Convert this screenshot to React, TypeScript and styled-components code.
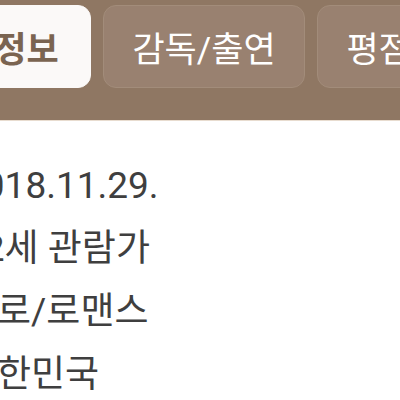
import styled, { createGlobalStyle } from "styled-components";

const GlobalStyle = createGlobalStyle`
  html, body {
    margin: 0;
    padding: 0;
    background: #ffffff;
    overflow: hidden;
  }
  body {
    font-family: Roboto, "Noto Sans CJK KR", sans-serif;
  }
`;

const Page = styled.div`
  width: 400px;
  height: 400px;
  overflow: hidden;
  background: #ffffff;
`;

const TabBar = styled.div`
  height: 121px;
  box-sizing: border-box;
  padding: 5px 0 0;
  background: #8f7763;
  border-bottom: 1px solid #e8dccf;
  display: flex;
  align-items: flex-start;
  gap: 12px;
  margin-left: -111px;
`;

const Tab = styled.div<{ $active?: boolean }>`
  flex: none;
  width: 202px;
  height: 83px;
  box-sizing: border-box;
  border-radius: 13px;
  display: flex;
  align-items: center;
  justify-content: center;
  font-size: 35px;
  white-space: nowrap;
  font-weight: ${(p) => (p.$active ? 700 : 400)};
  color: ${(p) => (p.$active ? "#7a6451" : "#ffffff")};
  background: ${(p) => (p.$active ? "#fbf9f8" : "#998170")};
  border: 1px solid ${(p) => (p.$active ? "#fbf9f8" : "#a28c7a")};
`;

const InfoList = styled.div`
  display: flex;
  flex-direction: column;
  padding-top: 33px;
  margin-left: -37px;
`;

const InfoValue = styled.div`
  height: 63px;
  line-height: 63px;
  font-size: 37px;
  color: #3f3f3f;
  white-space: nowrap;
`;

const tabs = ["기본 정보", "감독/출연", "평점/리뷰"];
const values = ["2018.11.29.", "12세 관람가", "멜로/로맨스", "대한민국"];

export default function App() {
  return (
    <Page>
      <GlobalStyle />
      <TabBar>
        {tabs.map((t, i) => (
          <Tab key={t} $active={i === 0}>
            {t}
          </Tab>
        ))}
      </TabBar>
      <InfoList>
        {values.map((v) => (
          <InfoValue key={v}>{v}</InfoValue>
        ))}
      </InfoList>
    </Page>
  );
}
